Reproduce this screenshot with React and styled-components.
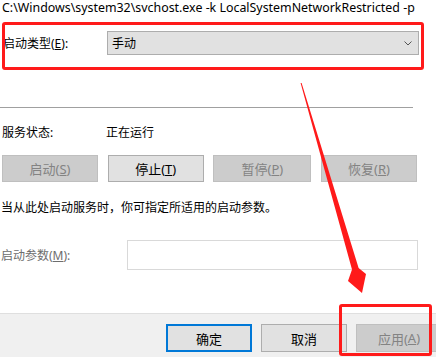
import React from "react"
import styled, { createGlobalStyle } from "styled-components"

const GlobalStyle = createGlobalStyle`
  html, body {
    margin: 0;
    padding: 0;
    background: #ffffff;
  }
  body {
    font-family: "Noto Sans", "Noto Sans CJK SC", sans-serif;
    font-size: 12px;
    color: #000000;
  }
`

const App = () => {
  return (
    <Page>
      <GlobalStyle />
      <PathLine>C:\Windows\system32\svchost.exe -k LocalSystemNetworkRestricted -p</PathLine>

      <StartRow>
        <Label>
          启动类型(<u>E</u>):
        </Label>
        <Combo>
          <span>手动</span>
          <svg width="8" height="5" viewBox="0 0 8 5">
            <path d="M0.5 0.5 L4 4 L7.5 0.5" fill="none" stroke="#555" strokeWidth="1" />
          </svg>
        </Combo>
      </StartRow>

      <Separator />

      <StatusRow>
        <Label>服务状态:</Label>
        <span>正在运行</span>
      </StatusRow>

      <ButtonRow>
        <ActionButton disabled>
          启动(<u>S</u>)
        </ActionButton>
        <ActionButton>
          停止(<u>T</u>)
        </ActionButton>
        <ActionButton disabled $wide>
          暂停(<u>P</u>)
        </ActionButton>
        <ActionButton disabled>
          恢复(<u>R</u>)
        </ActionButton>
      </ButtonRow>

      <Hint>当从此处启动服务时，你可指定所适用的启动参数。</Hint>

      <ParamRow>
        <Label $muted>
          启动参数(<u>M</u>):
        </Label>
        <ParamInput />
      </ParamRow>

      <Footer>
        <DialogButton $default>确定</DialogButton>
        <DialogButton>取消</DialogButton>
        <DialogButton disabled>
          应用(<u>A</u>)
        </DialogButton>
      </Footer>

      <Highlight style={{ left: 2, top: 22, width: 422, height: 48 }} />
      <Highlight style={{ left: 339, top: 304, width: 93, height: 52 }} />

      <Annotation width="436" height="357" viewBox="0 0 436 357">
        <polygon
          points="300.6,83 301.6,83 358.6,268 366,274 362,293 348,281 352,269.5"
          fill="#ff1a1a"
        />
      </Annotation>
    </Page>
  )
}

const Page = styled.div`
  position: relative;
  width: 436px;
  height: 357px;
  overflow: hidden;
  display: flex;
  flex-direction: column;
`

const PathLine = styled.div`
  height: 16px;
  line-height: 16px;
  padding-left: 2px;
  font-size: 12.4px;
  white-space: nowrap;
`

const Label = styled.span`
  width: 104px;
  flex: none;
  color: ${({ $muted }) => ($muted ? "#6d6d6d" : "#000000")};
`

const StartRow = styled.div`
  display: flex;
  align-items: center;
  margin-top: 15px;
  padding-left: 3px;
`

const Combo = styled.div`
  width: 312px;
  height: 24px;
  box-sizing: border-box;
  background: #e1e1e1;
  border: 1px solid #adadad;
  display: flex;
  align-items: center;
  justify-content: space-between;
  padding: 0 6px 0 4px;
`

const Separator = styled.div`
  width: 413px;
  height: 1px;
  background: #a0a0a0;
  margin-top: 52px;
`

const StatusRow = styled.div`
  display: flex;
  align-items: center;
  height: 16px;
  margin-top: 16px;
  padding-left: 2px;
`

const ButtonRow = styled.div`
  display: flex;
  justify-content: space-between;
  width: 415px;
  margin: 15px 0 0 2px;
`

const ActionButton = styled.div`
  width: ${({ $wide }) => ($wide ? 98 : 96)}px;
  height: 27px;
  box-sizing: border-box;
  display: flex;
  align-items: center;
  justify-content: center;
  background: ${({ disabled }) => (disabled ? "#cccccc" : "#e1e1e1")};
  border: 1px solid ${({ disabled }) => (disabled ? "#bfbfbf" : "#adadad")};
  color: ${({ disabled }) => (disabled ? "#838383" : "#000000")};
  font-size: 13px;
`

const Hint = styled.div`
  height: 16px;
  line-height: 16px;
  margin-top: 18px;
  padding-left: 1px;
`

const ParamRow = styled.div`
  display: flex;
  align-items: center;
  margin-top: 24px;
  padding-left: 1px;
`

const ParamInput = styled.div`
  margin-left: 22px;
  width: 291px;
  height: 30px;
  box-sizing: border-box;
  border: 1px solid #d9d9d9;
  background: #ffffff;
`

const Footer = styled.div`
  margin-top: auto;
  height: 44px;
  box-sizing: border-box;
  background: #f0f0f0;
  border-top: 1px solid #dfdfdf;
  display: flex;
  align-items: flex-start;
  padding: 10px 0 0 166px;
  gap: 9px;
`

const DialogButton = styled.div`
  flex: none;
  width: 86px;
  height: 28px;
  box-sizing: border-box;
  display: flex;
  align-items: center;
  justify-content: center;
  font-size: 13px;
  background: ${({ disabled }) => (disabled ? "#cccccc" : "#e1e1e1")};
  border: ${({ $default, disabled }) =>
    $default ? "2px solid #0078d7" : `1px solid ${disabled ? "#bfbfbf" : "#adadad"}`};
  color: ${({ disabled }) => (disabled ? "#838383" : "#000000")};
`

const Highlight = styled.div`
  position: absolute;
  box-sizing: border-box;
  border: 3px solid #ff1a1a;
  border-radius: 3px;
  pointer-events: none;
`

const Annotation = styled.svg`
  position: absolute;
  left: 0;
  top: 0;
  pointer-events: none;
`

export default App
